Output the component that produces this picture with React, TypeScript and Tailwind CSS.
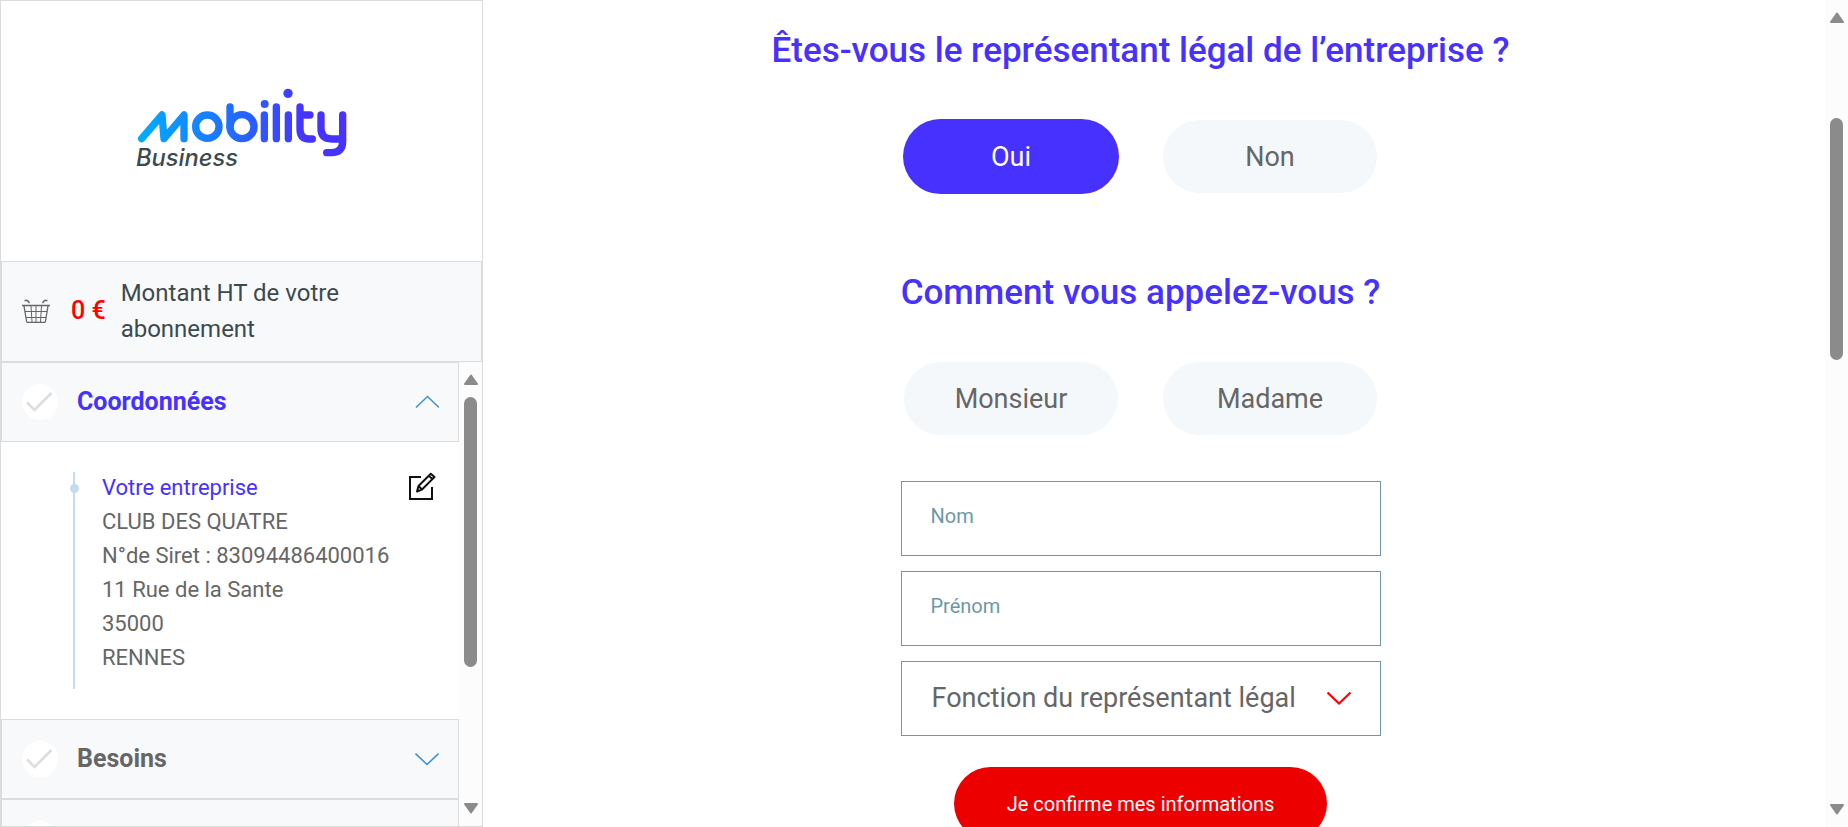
import { useState } from "react";
import type { ReactNode } from "react";

function Logo() {
  return (
    <svg viewBox="0 0 750 330" className="h-[110px] w-[250px]" role="img" aria-label="Mobility Business">
      <defs>
        <linearGradient id="logo-gradient" gradientUnits="userSpaceOnUse" x1="54" y1="0" x2="680" y2="0">
          <stop offset="0" stopColor="#00aeff" />
          <stop offset="0.5" stopColor="#2566ff" />
          <stop offset="0.8" stopColor="#4733ff" />
          <stop offset="1" stopColor="#4733ff" />
        </linearGradient>
      </defs>
      <g fill="none" stroke="url(#logo-gradient)" strokeWidth="22" strokeLinecap="round" strokeLinejoin="round">
        <path d="M65 206 L126 135 L132 206 L192 135 L192 206" />
        <circle cx="262" cy="170" r="35" />
        <path d="M330 111 V170" />
        <circle cx="366" cy="170" r="36" />
        <path d="M433 135 V206 M469 111 V206 M505 135 V206" />
        <path d="M540 111 V177 Q540 207 567 207 H577 M540 135 H570" />
        <path d="M603 135 V175 Q603 207 635 207 H668 M668 135 V213 Q668 248 635 248 H620" />
      </g>
      <g fill="url(#logo-gradient)">
        <circle cx="434" cy="102" r="12" />
        <circle cx="504" cy="70" r="14" />
      </g>
      <text x="48" y="288" fill="#3c4a4f" fontFamily="Inter, sans-serif" fontStyle="italic" fontWeight="500" fontSize="71">
        Business
      </text>
    </svg>
  );
}

function BasketIcon() {
  return (
    <svg viewBox="0 0 28 24" className="h-6 w-7 shrink-0" fill="none" stroke="#666" strokeWidth="1" aria-hidden="true">
      <path d="M0 6.5 H28 M2 7 L4.5 22 Q4.700 23.500 6 23.500 H22 Q23.300 23.500 23.500 22 L26 7" strokeWidth="1.300" />
      <path d="M3 12.500 H25 M4 18.500 H24 M9 7 L10 23 M14 7 V23 M19.500 7 L18.500 23" />
      <path d="M2.500 1.500 H5.500 L7.500 4 M25.500 1.500 H22.500 L20.500 4" strokeWidth="1.500" />
    </svg>
  );
}

function EditIcon() {
  return (
    <svg viewBox="0 0 28 28" className="size-7" fill="none" stroke="#111" strokeWidth="2" aria-hidden="true">
      <path d="M13 5 H2 V27 H24 V15" />
      <path d="M9 19.500 L10.500 14 L22.800 1.800 L26.500 5 L14 17.500 Z M21 4 L24.500 7 M10.500 14 L14 17.500" strokeWidth="2" strokeLinejoin="round" />
    </svg>
  );
}

function Chevron({ up = false, weight, className }: { up?: boolean; weight: number; className: string }) {
  return (
    <svg viewBox="0 0 24 14" className={className} fill="none" stroke="currentColor" strokeWidth={weight} aria-hidden="true">
      <path d={up ? "M1 12.500 L12.500 1.500 L24 12.500" : "M0.500 1.500 L12 12.500 L23.500 1.500"} />
    </svg>
  );
}

function Check() {
  return (
    <svg viewBox="0 0 36 36" className="size-9 shrink-0" aria-hidden="true">
      <circle cx="18" cy="18" r="18" fill="#fff" />
      <path d="M5 18.500 L12.500 26 L29.500 9" fill="none" stroke="#ddd" strokeWidth="2.600" />
    </svg>
  );
}

function ScrollTrack({ children }: { children: ReactNode }) {
  return (
    <div className="flex w-[23px] shrink-0 flex-col items-center bg-[#fcfcfc] py-3" aria-hidden="true">
      <svg viewBox="0 0 14 11" className="h-[11px] w-[14px] shrink-0" fill="#8b8b8b" stroke="#8b8b8b" strokeWidth="2" strokeLinejoin="round">
        <path d="M7 1.500 L13 10 H1 Z" />
      </svg>
      {children}
      <svg viewBox="0 0 14 11" className="mt-auto h-[11px] w-[14px] shrink-0" fill="#8b8b8b" stroke="#8b8b8b" strokeWidth="2" strokeLinejoin="round">
        <path d="M7 9.500 L13 1 H1 Z" />
      </svg>
    </div>
  );
}

function StepHeader({ title, open = false }: { title?: string; open?: boolean }) {
  return (
    <button
      type="button"
      aria-expanded={open}
      aria-label={title ?? "Étape suivante"}
      className="flex h-20 w-full shrink-0 items-center border border-[#dcdcdc] bg-[#f8f9fb] pr-[19px] pl-5 text-left"
    >
      <Check />
      <span className={open ? "ml-[19px] grow text-[25px] font-bold text-[#4631ff]" : "ml-[19px] grow text-[25px] font-bold text-[#666]"}>
        {title}
      </span>
      <Chevron up={open} weight={1.6} className="h-[14px] w-6 text-[#3f93d2]" />
    </button>
  );
}

const address = ["CLUB DES QUATRE", "N°de Siret : 83094486400016", "11 Rue de la Sante", "35000", "RENNES"];

function Sidebar() {
  return (
    <aside className="flex w-[483px] shrink-0 flex-col overflow-hidden border border-[#dcdcdc]">
      <div className="flex h-[260px] shrink-0 items-start pt-[69px] pl-[119px]">
        <Logo />
      </div>
      <div className="flex h-[101px] shrink-0 items-center border border-[#dcdcdc] bg-[#f8f9fb] px-5 pb-0.5 text-2xl">
        <BasketIcon />
        <strong className="ml-[21px] shrink-0 text-[25px] font-medium text-[#ff0000]">0 €</strong>
        <span className="ml-[15px] w-60 leading-9 text-[#3c4a4f]">Montant HT de votre abonnement</span>
      </div>
      <div className="flex min-h-0 grow">
        <div className="flex min-w-0 grow flex-col overflow-hidden">
          <StepHeader title="Coordonnées" open />
          <div className="flex h-[277px] shrink-0 pt-[30px] pr-[23px] pl-[72px]">
            <div className="flex h-[217px] w-[2px] justify-center bg-[#c5dcef]">
              <span className="mt-3 size-[9px] shrink-0 rounded-full bg-[#c5dcef]" />
            </div>
            <div className="-mt-px ml-[27px] grow text-[22px] leading-[34px] text-[#666]">
              <p className="text-[#4631ff]">Votre entreprise</p>
              {address.map((line) => (
                <p key={line}>{line}</p>
              ))}
            </div>
            <button type="button" aria-label="Modifier votre entreprise" className="self-start">
              <EditIcon />
            </button>
          </div>
          <StepHeader title="Besoins" />
          <StepHeader />
        </div>
        <ScrollTrack>
          <div className="mt-3 h-[270px] w-[13px] rounded-full bg-[#8b8b8b]" />
        </ScrollTrack>
      </div>
    </aside>
  );
}

function Choice({ label, selected, onSelect }: { label: string; selected: boolean; onSelect: () => void }) {
  return (
    <button
      type="button"
      aria-pressed={selected}
      onClick={onSelect}
      className={
        selected
          ? "h-[73px] w-[214px] rounded-full bg-[#4631ff] pt-0.5 text-[27px] text-white ring-1 ring-[#4631ff]"
          : "h-[73px] w-[214px] rounded-full bg-[#f4f8fb] pt-0.5 text-[27px] text-[#666]"
      }
    >
      {label}
    </button>
  );
}

function Field({ id, label }: { id: string; label: string }) {
  const [value, setValue] = useState("");
  return (
    <div className="relative">
      <input
        id={id}
        value={value}
        onChange={(event) => setValue(event.target.value)}
        className="block h-[75px] w-full border border-[#6c98a8] bg-white px-[30px] pt-5 text-xl text-[#666] outline-none"
      />
      <label htmlFor={id} className="pointer-events-none absolute top-5 left-[30px] text-xl leading-[30px] text-[#6c98a8]">
        {label}
      </label>
    </div>
  );
}

function Title({ children }: { children: ReactNode }) {
  return <h2 className="text-center text-[35px] leading-[48px] font-medium text-[#4631ff]">{children}</h2>;
}

export default function App() {
  const [legal, setLegal] = useState("Oui");
  const [civility, setCivility] = useState("");

  return (
    <div className="flex h-screen overflow-hidden bg-white font-[Roboto,sans-serif]">
      <Sidebar />
      <main className="flex min-w-0 grow flex-col items-center overflow-hidden pt-[27px] pr-[27px]">
        <Title>Êtes-vous le représentant légal de l’entreprise ?</Title>
        <div className="mt-[45px] flex shrink-0 gap-[45px]">
          {["Oui", "Non"].map((label) => (
            <Choice key={label} label={label} selected={legal === label} onSelect={() => setLegal(label)} />
          ))}
        </div>
        <div className="mt-[76px] shrink-0">
          <Title>Comment vous appelez-vous ?</Title>
        </div>
        <div className="mt-[45px] flex shrink-0 gap-[45px]">
          {["Monsieur", "Madame"].map((label) => (
            <Choice key={label} label={label} selected={civility === label} onSelect={() => setCivility(label)} />
          ))}
        </div>
        <form className="mt-[46px] flex w-[480px] shrink-0 flex-col gap-[15px]" onSubmit={(event) => event.preventDefault()}>
          <Field id="nom" label="Nom" />
          <Field id="prenom" label="Prénom" />
          <div className="relative">
            <select
              aria-label="Fonction du représentant légal"
              className="block h-[75px] w-full appearance-none border border-[#6c98a8] bg-white pr-20 pl-[30px] text-[27px] text-[#666] outline-none"
            >
              <option>Fonction du représentant légal</option>
            </select>
            <Chevron weight={2.2} className="pointer-events-none absolute top-[30px] right-[30px] h-[14px] w-6 text-[#ff0000]" />
          </div>
          <button type="submit" className="mt-4 h-[73px] w-[373px] self-center rounded-full bg-[#ed0000] text-xl text-white">
            Je confirme mes informations
          </button>
        </form>
      </main>
      <ScrollTrack>
        <div className="mt-[95px] h-[242px] w-[13px] rounded-full bg-[#8b8b8b]" />
      </ScrollTrack>
    </div>
  );
}
